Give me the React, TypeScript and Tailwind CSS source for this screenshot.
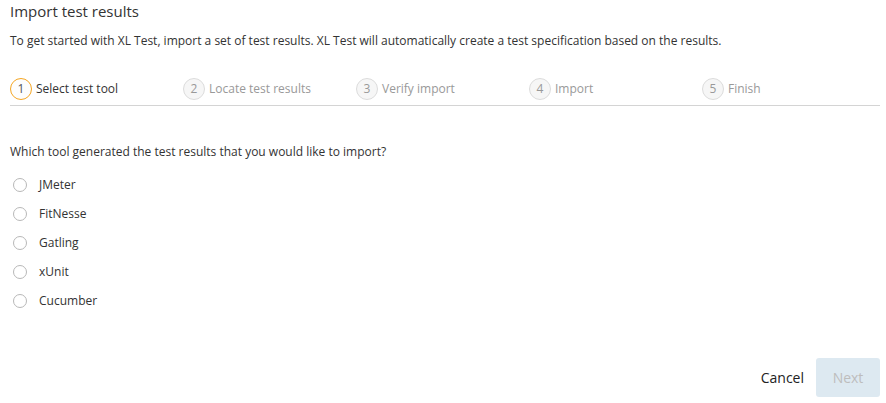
const steps = ['Select test tool', 'Locate test results', 'Verify import', 'Import', 'Finish']
const tools = ['JMeter', 'FitNesse', 'Gatling', 'xUnit', 'Cucumber']

export default function App() {
  return (
    <div className="flex h-[403px] w-[886px] flex-col bg-white pl-[10px] pr-[6px] pt-[1px] font-['Open_Sans',sans-serif] text-[#333]">
      <h1 className="text-[15px] leading-[20px]">Import test results</h1>
      <p className="mt-[11px] text-[12px] leading-[18px]">
        To get started with XL Test, import a set of test results. XL Test will automatically create a test specification based on the results.
      </p>

      <ol className="mt-[28px] flex border-b border-[#d4d4d4] pb-[5px]">
        {steps.map((s, i) => (
          <li key={s} className="flex w-[173px] items-center gap-[4px]">
            <span
              className={
                i === 0
                  ? 'flex h-[22px] w-[22px] items-center justify-center rounded-full border-[1.5px] border-[#f5a623] bg-[#fdfdfd] text-[12px] text-[#555]'
                  : 'flex h-[22px] w-[22px] items-center justify-center rounded-full border-[1.5px] border-[#dcdcdc] bg-[#f6f6f6] text-[12px] text-[#999]'
              }
            >
              {i + 1}
            </span>
            <span className={i === 0 ? 'text-[12px] text-[#333]' : 'text-[12px] text-[#999]'}>{s}</span>
          </li>
        ))}
      </ol>

      <p className="mt-[37px] text-[12px] leading-[18px]">
        Which tool generated the test results that you would like to import?
      </p>

      <div className="mt-[15px] flex flex-col gap-[11px] pl-[3px]">
        {tools.map((t) => (
          <label key={t} className="flex h-[18px] items-center gap-[12px] text-[12px]">
            <span className="h-[14px] w-[14px] rounded-full border border-[#b8b8b8] bg-white" />
            {t}
          </label>
        ))}
      </div>

      <div className="mt-auto mb-[6px] flex items-center justify-end gap-[12px]">
        <button className="text-[14px] text-[#222]">Cancel</button>
        <button className="h-[39px] w-[64px] rounded-[3px] bg-[#dde9f1] text-[14px] text-[#bdbdbd]">Next</button>
      </div>
    </div>
  )
}
